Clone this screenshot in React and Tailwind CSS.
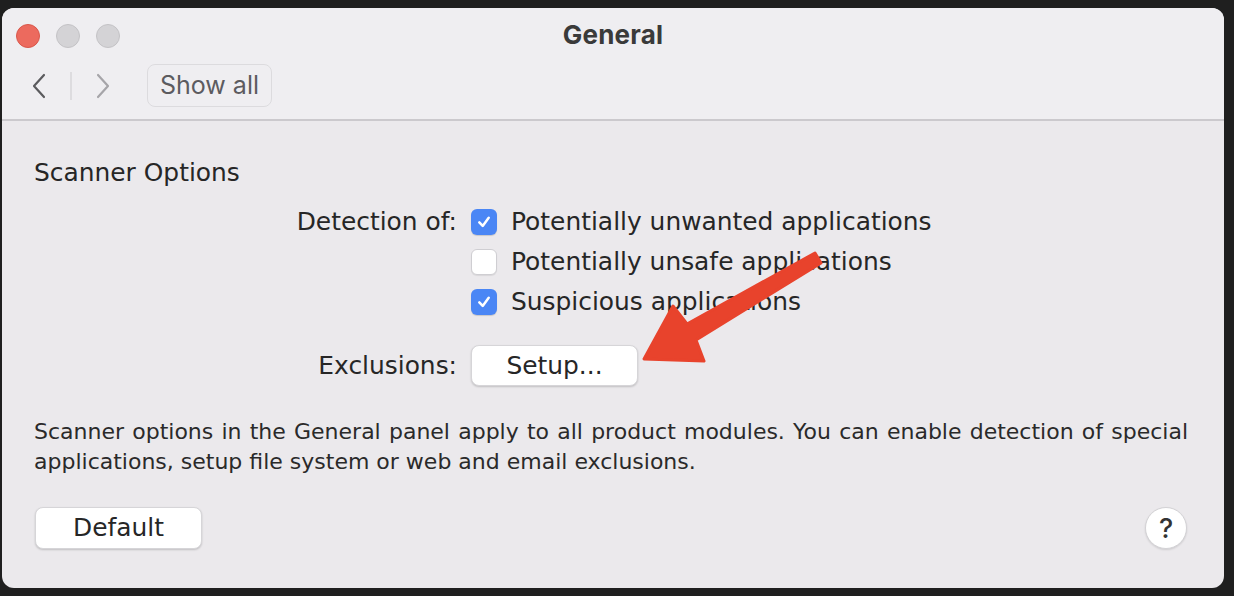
import React from 'react';

const lucida = { fontFamily: '"DejaVu Sans", "Liberation Sans", sans-serif' };
const sf = { fontFamily: 'Inter, "Noto Sans", sans-serif' };

const Checkbox = ({ checked }) =>
  checked ? (
    <span className="w-[26px] h-[26px] rounded-[6px] bg-[#4a86f5] flex items-center justify-center shadow-[0_1px_1px_rgba(0,0,0,0.15)] shrink-0">
      <svg width="16" height="16" viewBox="0 0 16 16">
        <path d="M3.3 8.4 L6.7 11.9 L12.7 3.8" fill="none" stroke="#fff" strokeWidth="2.5" strokeLinecap="round" strokeLinejoin="round" />
      </svg>
    </span>
  ) : (
    <span className="w-[26px] h-[26px] rounded-[6px] bg-white border border-[#cfced2] shadow-[0_1px_1px_rgba(0,0,0,0.08)] shrink-0" />
  );

const Option = ({ label, checked }) => (
  <div className="h-[40px] flex items-center gap-[14px]">
    <Checkbox checked={checked} />
    <span>{label}</span>
  </div>
);

const App = () => {
  return (
    <div className="relative w-[1234px] h-[596px] bg-[#1f1f1f] pt-[8px] pl-[2px] pr-[10px] pb-[8px] overflow-hidden">
      <div className="w-[1222px] h-[580px] rounded-[12px] overflow-hidden bg-[#ebe9ec] flex flex-col text-[#262626]">
        {/* Barre de titre + toolbar */}
        <div className="h-[113px] bg-[#efeef1] border-b-2 border-[#cbc9cd] px-[14px] pt-[16px]">
          <div className="grid grid-cols-[1fr_auto_1fr] items-center h-[24px]">
            <div className="flex gap-[16px]">
              <span className="w-[24px] h-[24px] rounded-full bg-[#ec6a5e] border border-[#d9574b]" />
              <span className="w-[24px] h-[24px] rounded-full bg-[#d4d3d6] border border-[#c4c3c6]" />
              <span className="w-[24px] h-[24px] rounded-full bg-[#d4d3d6] border border-[#c4c3c6]" />
            </div>
            <div style={sf} className="text-[26px] font-bold text-[#3a3a3a] leading-none tracking-[0.2px] -mt-[2px]">General</div>
            <div />
          </div>
          <div className="mt-[16px] flex items-center h-[43px]">
            <div className="w-[40px] flex justify-center ml-[3px]">
              <svg width="18" height="26" viewBox="0 0 18 26">
                <path d="M14 2 L4 13 L14 24" fill="none" stroke="#5b5b5e" strokeWidth="2.2" strokeLinecap="round" strokeLinejoin="round" />
              </svg>
            </div>
            <span className="w-[2px] h-[28px] bg-[#dddcdf] ml-[11px]" />
            <div className="w-[40px] flex justify-center ml-[11px]">
              <svg width="18" height="26" viewBox="0 0 18 26">
                <path d="M4 2 L14 13 L4 24" fill="none" stroke="#a6a5a9" strokeWidth="2.2" strokeLinecap="round" strokeLinejoin="round" />
              </svg>
            </div>
            <div
              style={sf}
              className="ml-[24px] h-[43px] w-[125px] rounded-[8px] border border-[#dcdbde] flex items-center justify-center text-[25px] text-[#5c5b5f]"
            >
              Show all
            </div>
          </div>
        </div>

        {/* Contenu */}
        <div style={lucida} className="flex-1 pl-[32px] pr-[36px] pt-[37px] text-[24.9px]">
          <div className="leading-[30px]">Scanner Options</div>

          <div className="mt-[14px] flex">
            <div className="w-[423px] h-[40px] flex items-center justify-end pr-[14px] box-content">Detection of:</div>
            <div className="-ml-[14px] pl-[14px]">
              <Option label="Potentially unwanted applications" checked />
              <Option label="Potentially unsafe applications" />
              <Option label="Suspicious applications" checked />
            </div>
          </div>

          <div className="mt-[23px] flex items-center">
            <div className="w-[423px] flex justify-end pr-[14px] box-content">Exclusions:</div>
            <button className="h-[41px] w-[167px] rounded-[8px] bg-white border border-[#d6d5d8] shadow-[0_1px_2px_rgba(0,0,0,0.18)] flex items-center justify-center">
              Setup...
            </button>
          </div>

          <div className="mt-[31px] text-[22px] leading-[30px] text-[#2a2a2a]">
            <div className="text-justify [text-align-last:justify]">
              Scanner options in the General panel apply to all product modules. You can enable detection of special
            </div>
            <div>applications, setup file system or web and email exclusions.</div>
          </div>

          <div className="mt-[30px] flex items-center justify-between">
            <button className="ml-[1px] h-[42px] w-[167px] rounded-[8px] bg-white border border-[#d6d5d8] shadow-[0_1px_2px_rgba(0,0,0,0.18)] flex items-center justify-center">
              Default
            </button>
            <button style={sf} className="mr-[1px] w-[42px] h-[42px] rounded-full bg-white border border-[#d3d2d5] shadow-[0_1px_2px_rgba(0,0,0,0.12)] flex items-center justify-center text-[27px] text-[#333] font-medium leading-none">
              ?
            </button>
          </div>
        </div>
      </div>

      {/* Flèche rouge d'annotation */}
      <svg className="absolute inset-0 pointer-events-none" width="1234" height="596" viewBox="0 0 1234 596">
        <polygon
          points="644,359 673,306 687,324 815,253 821,263 696,340 704,361"
          fill="#e8432c"
          stroke="#e8432c"
          strokeWidth="3"
          strokeLinejoin="round"
        />
      </svg>
    </div>
  );
};

export default App;
